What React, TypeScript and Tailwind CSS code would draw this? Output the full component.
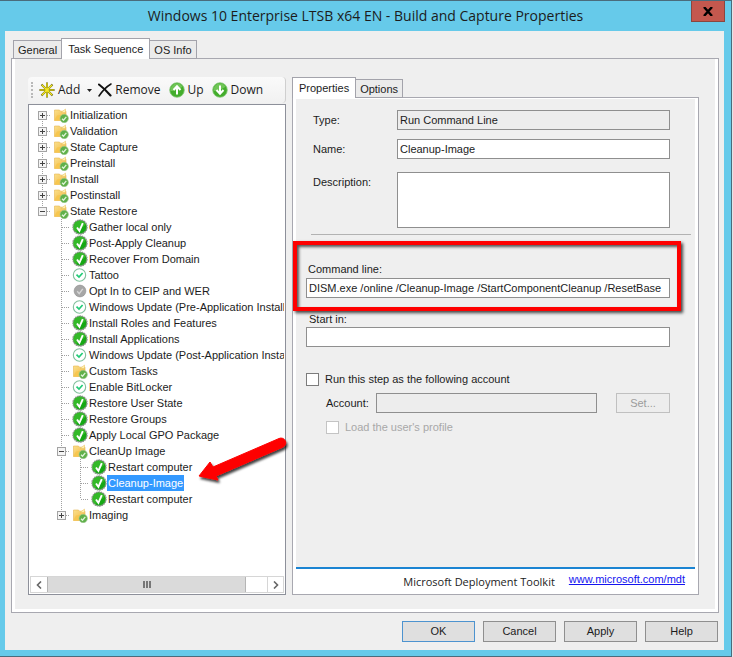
import type { ReactNode } from "react";

type IconKind = "folder" | "done" | "pending" | "disabled";

type Step = {
  label: string;
  depth: number;
  icon: IconKind;
  box?: "plus" | "minus";
  first?: boolean;
  last?: boolean;
  selected?: boolean;
};

const STEPS: Step[] = [
  { label: "Initialization", depth: 0, icon: "folder", box: "plus", first: true },
  { label: "Validation", depth: 0, icon: "folder", box: "plus" },
  { label: "State Capture", depth: 0, icon: "folder", box: "plus" },
  { label: "Preinstall", depth: 0, icon: "folder", box: "plus" },
  { label: "Install", depth: 0, icon: "folder", box: "plus" },
  { label: "Postinstall", depth: 0, icon: "folder", box: "plus" },
  { label: "State Restore", depth: 0, icon: "folder", box: "minus", last: true },
  { label: "Gather local only", depth: 1, icon: "done" },
  { label: "Post-Apply Cleanup", depth: 1, icon: "done" },
  { label: "Recover From Domain", depth: 1, icon: "done" },
  { label: "Tattoo", depth: 1, icon: "pending" },
  { label: "Opt In to CEIP and WER", depth: 1, icon: "disabled" },
  { label: "Windows Update (Pre-Application Installation)", depth: 1, icon: "pending" },
  { label: "Install Roles and Features", depth: 1, icon: "done" },
  { label: "Install Applications", depth: 1, icon: "done" },
  { label: "Windows Update (Post-Application Installation)", depth: 1, icon: "pending" },
  { label: "Custom Tasks", depth: 1, icon: "folder" },
  { label: "Enable BitLocker", depth: 1, icon: "pending" },
  { label: "Restore User State", depth: 1, icon: "done" },
  { label: "Restore Groups", depth: 1, icon: "done" },
  { label: "Apply Local GPO Package", depth: 1, icon: "done" },
  { label: "CleanUp Image", depth: 1, icon: "folder", box: "minus" },
  { label: "Restart computer", depth: 2, icon: "done" },
  { label: "Cleanup-Image", depth: 2, icon: "done", selected: true },
  { label: "Restart computer", depth: 2, icon: "done", last: true },
  { label: "Imaging", depth: 1, icon: "folder", box: "plus", last: true },
];

function StepIcon({ kind }: { kind: IconKind }) {
  if (kind === "folder") {
    return (
      <svg viewBox="0 0 16 16" className="size-4 shrink-0" aria-hidden="true">
        <defs>
          <linearGradient id="folder" x1="0" y1="0" x2="1" y2="1">
            <stop offset="0" stopColor="#fbe08a" />
            <stop offset="1" stopColor="#f0b541" />
          </linearGradient>
        </defs>
        <path d="M1.500 3h5l1 1.200h5.500V13.500H1.500z" fill="url(#folder)" stroke="#e6b550" strokeWidth=".6" />
        <path d="M8 5.500L12.500 2v3.500z" fill="#fff0b0" stroke="#e8bf5a" strokeWidth=".5" />
        <path d="M1.200 13.500L4 8.500l9-1.500v6.500z" fill="#f7c64f" />
        <circle cx="11.200" cy="11.500" r="4.200" fill="#5fb04a" stroke="#9fca92" strokeWidth=".6" />
        <path d="M9 11.800l1.500 1.400 2.800-3.300" fill="none" stroke="#dff3d9" strokeWidth="1.300" />
      </svg>
    );
  }
  if (kind === "done") {
    return (
      <svg viewBox="0 0 16 16" className="size-4 shrink-0" aria-hidden="true">
        <circle cx="8" cy="8" r="7" fill="#16a814" stroke="#8c8f8c" strokeWidth="1.400" strokeDasharray="1.600 .7" />
        <path d="M8 1.800a6.200 6.200 0 0 1 5.800 4L4 13.200A6.200 6.200 0 0 1 8 1.800z" fill="#56cf40" opacity=".45" />
        <path d="M5 8.500l2.400 3.300 3.400-7.600" fill="none" stroke="#fff" strokeWidth="1.900" />
      </svg>
    );
  }
  if (kind === "pending") {
    return (
      <svg viewBox="0 0 16 16" className="size-4 shrink-0" aria-hidden="true">
        <circle cx="7.500" cy="8" r="6.200" fill="#fff" stroke="#82bf9c" strokeWidth="1.100" />
        <path d="M4.500 7.600l2.500 2.400 3.600-4" fill="none" stroke="#22cc77" strokeWidth="1.700" />
      </svg>
    );
  }
  return (
    <svg viewBox="0 0 16 16" className="size-4 shrink-0" aria-hidden="true">
      <circle cx="8" cy="8" r="5.900" fill="#a6a6a6" stroke="#8f8f8f" strokeWidth=".6" />
      <path d="M5.200 8.200l2 2.400 3.600-4.800" fill="none" stroke="#d6d6d6" strokeWidth="1.400" />
    </svg>
  );
}

/** One indent column of a tree row: dotted guides and the expander box. */
function Guide({ up, down, across, box }: { up?: boolean; down?: boolean; across?: boolean; box?: "plus" | "minus" }) {
  return (
    <svg viewBox="0 0 19 16" className="h-4 w-[19px] shrink-0" aria-hidden="true" fill="none">
      <g stroke="#a0a0a0" strokeDasharray="1 1">
        {up && <path d="M9.500 0V8" />}
        {down && <path d="M9.500 8V16" />}
        {across && <path d="M10 8.500H18" />}
      </g>
      {box && (
        <>
          <rect x="5.500" y="4.500" width="8" height="8" fill="#f4f4f4" stroke="#a3a3a3" />
          <path d={box === "plus" ? "M7 8.500h5M9.500 6v5" : "M7 8.500h5"} stroke="#444" />
        </>
      )}
    </svg>
  );
}

function TreeRow({ step }: { step: Step }) {
  return (
    <li role="treeitem" aria-level={step.depth + 1} aria-selected={!!step.selected} className="flex h-4 items-center">
      {step.depth > 0 && <Guide />}
      {step.depth > 1 && <Guide up down />}
      <Guide up={!step.first} down={!step.last} across box={step.box} />
      <span className="flex w-[18px] shrink-0 justify-center">
        <StepIcon kind={step.icon} />
      </span>
      <span className={step.selected ? "-ml-px bg-[#3399ff] px-px leading-4 whitespace-nowrap text-white" : "leading-4 whitespace-nowrap"}>
        {step.label}
      </span>
    </li>
  );
}

function Tabs({ label, names, active }: { label: string; names: string[]; active: string }) {
  return (
    <div role="tablist" aria-label={label} className="relative -mb-px flex h-[21px] items-end">
      {names.map((name) =>
        name === active ? (
          <button key={name} role="tab" aria-selected className="h-[21px] border border-b-0 border-[#a3a3ab] bg-white px-1.5 leading-4">
            {name}
          </button>
        ) : (
          <button key={name} role="tab" aria-selected={false} className="h-[19px] border border-l-0 border-[#a3a3ab] bg-[#ebebeb] px-1 leading-4 first:border-l first:border-r-0">
            {name}
          </button>
        ),
      )}
    </div>
  );
}

function ToolButton({ icon, children }: { icon: ReactNode; children: ReactNode }) {
  return (
    <button className="flex items-center gap-[3px]">
      {icon}
      {children}
    </button>
  );
}

function ArrowBall({ down }: { down?: boolean }) {
  return (
    <svg viewBox="0 0 16 16" className="size-4" aria-hidden="true">
      <circle cx="8" cy="8" r="7.300" fill="#43ad2c" stroke="#87c878" strokeWidth=".8" />
      <path d="M8 1.400A6.600 6.600 0 0 0 1.500 9C5 9 11 7 13.500 4.500A6.600 6.600 0 0 0 8 1.400z" fill="#8ed673" opacity=".6" />
      <path d={down ? "M8 3.500v8M4.500 8l3.500 3.800L11.500 8" : "M8 12.500v-8M4.500 8L8 4.200 11.500 8"} fill="none" stroke="#fff" strokeWidth="2" />
    </svg>
  );
}

function Toolbar() {
  return (
    <div role="toolbar" className="flex h-[26px] items-center rounded-sm border-r border-[#cfcfcf] bg-gradient-to-b from-[#fafafa] to-[#f1f1f1] pl-[3px] font-['Open_Sans','Noto_Sans',sans-serif] text-xs">
      <span className="mr-1.5 h-4 border-l-2 border-dotted border-[#b9b9b9]" />
      <ToolButton
        icon={
          <svg viewBox="0 0 16 16" className="size-4" aria-hidden="true">
            <path d="M8 .5v15M.5 8h15M2.500 2.500l11 11M13.500 2.500l-11 11" stroke="#6a6412" strokeWidth="2" />
            <path d="M8 1v14M1 8h14M3 3l10 10M13 3L3 13" stroke="#f6ea20" strokeWidth="1.200" />
          </svg>
        }
      >
        Add
        <svg viewBox="0 0 5 3" className="ml-1 h-[3px] w-[5px]" aria-hidden="true">
          <path d="M0 0h5L2.500 3z" fill="#222" />
        </svg>
      </ToolButton>
      <span className="w-1.5" />
      <ToolButton
        icon={
          <svg viewBox="0 0 14 14" className="size-3.5" aria-hidden="true" fill="none" stroke="#111" strokeLinecap="round">
            <path d="M1 1.500c4 3 8 7 11.500 11" strokeWidth="2.100" />
            <path d="M13 1C8 4 4 8.500 1 13" strokeWidth="1.500" />
          </svg>
        }
      >
        Remove
      </ToolButton>
      <span className="w-2" />
      <ToolButton icon={<ArrowBall />}>Up</ToolButton>
      <span className="w-2" />
      <ToolButton icon={<ArrowBall down />}>Down</ToolButton>
    </div>
  );
}

function Chevron({ right }: { right?: boolean }) {
  return (
    <svg viewBox="0 0 6 8" className="h-2 w-1.5" aria-hidden="true" fill="none" stroke="#666" strokeWidth="1.600">
      <path d={right ? "M1 .5L4.500 4 1 7.500" : "M5 .5L1.500 4 5 7.500"} />
    </svg>
  );
}

function ScrollBar() {
  return (
    <div className="m-px flex h-[17px] border border-[#d6d6d6] bg-white">
      <button aria-label="Scroll left" className="flex w-4 items-center justify-center">
        <Chevron />
      </button>
      <button aria-label="Scroll position" className="flex w-[199px] items-center justify-center gap-px border-x border-[#b5b5b5] bg-[#dadada]">
        <span className="h-[7px] w-0.5 bg-[#777]" />
        <span className="h-[7px] w-0.5 bg-[#777]" />
        <span className="h-[7px] w-0.5 bg-[#777]" />
      </button>
      <span className="flex-1" />
      <button aria-label="Scroll right" className="flex w-4 items-center justify-center border-l border-[#d6d6d6]">
        <Chevron right />
      </button>
    </div>
  );
}

const FIELD = "h-5 min-w-0 border border-[#8f8f8f] px-0.5 leading-4 outline-none";

function PropertiesForm() {
  return (
    <form className="flex flex-1 flex-col bg-[#efefef] pt-[11px]">
      <div className="grid grid-cols-[84px_1fr] pr-[25px] pl-[17px]">
        <label htmlFor="type" className="leading-5">Type:</label>
        <input id="type" readOnly defaultValue="Run Command Line" className={`${FIELD} bg-[#ededed]`} />
        <label htmlFor="name" className="mt-[9px] leading-5">Name:</label>
        <input id="name" defaultValue="Cleanup-Image" className={`${FIELD} mt-[9px] bg-white`} />
        <label htmlFor="description" className="mt-[13px] leading-5">Description:</label>
        <textarea id="description" className="mt-[13px] h-14 resize-none border border-[#8f8f8f] bg-white outline-none" />
      </div>
      <hr className="mt-1.5 mr-1 mb-px ml-[15px] border-t border-[#b2b2b2]" />

      <div className="relative mt-[5px] flex h-[70px] flex-col pt-5 pr-[25px] pl-2.5">
        <label htmlFor="command" className="pl-0.5 leading-4">Command line:</label>
        <input id="command" defaultValue="DISM.exe /online /Cleanup-Image /StartComponentCleanup /ResetBase" className={`${FIELD} mt-px bg-white`} />
        <div className="pointer-events-none absolute inset-y-0 right-3.5 -left-[3px] border-4 border-[#fe0000] shadow-[2px_2px_3px_#444,inset_2px_2px_3px_#555]" />
      </div>

      <div className="flex flex-col pr-[25px] pl-2.5">
        <label htmlFor="start" className="pl-[3px] leading-4">Start in:</label>
        <input id="start" className={`${FIELD} bg-white`} />
      </div>

      <label className="mt-6 ml-2.5 flex h-4 items-center gap-1.5 leading-4">
        <input type="checkbox" className="size-[13px] appearance-none border border-[#7c7c7c] bg-white" />
        Run this step as the following account
      </label>
      <div className="mt-1.5 flex items-center pr-[25px] pl-[30px]">
        <label htmlFor="account" className="w-[50px] leading-5">Account:</label>
        <input id="account" disabled className={`${FIELD} flex-1 bg-[#ededed]`} />
        <button type="button" disabled className="ml-[19px] h-5 w-[54px] border border-[#c0c0c0] bg-[#ededed] text-[#9c9c9c]">Set...</button>
      </div>
      <label className="mt-1.5 ml-[30px] flex h-4 items-center gap-1.5 leading-4 text-[#a8a8a8]">
        <input type="checkbox" disabled className="size-[13px] appearance-none border border-[#c4c4c4] bg-white" />
        Load the user's profile
      </label>
    </form>
  );
}

function DialogButton({ primary, children }: { primary?: boolean; children: ReactNode }) {
  return (
    <button className={primary ? "h-[21px] w-[73px] border border-[#4d93cf] bg-[#dfdfdf]" : "h-[21px] w-[73px] border border-[#8f8f8f] bg-[#dfdfdf]"}>
      {children}
    </button>
  );
}

export default function App() {
  return (
    <div className="min-h-screen bg-[#dfe6ea] pr-px font-['Liberation_Sans',Arial,sans-serif] text-[11px] text-[#1c1c1c]">
      <main className="flex min-h-screen flex-col border-t border-r border-b border-[#4a6c7c] bg-[#66caea]">
        <header className="flex h-[30px] items-center pr-1.5 pl-10">
          <h1 className="flex-1 text-center font-['Open_Sans','Noto_Sans',sans-serif] text-sm">
            Windows 10 Enterprise LTSB x64 EN - Build and Capture Properties
          </h1>
          <button aria-label="Close" className="flex h-[21px] w-[34px] items-center justify-center self-start border border-t-0 border-[#8a4640] bg-[#c4584e]">
            <svg viewBox="0 0 10 9" className="h-[9px] w-2.5" aria-hidden="true">
              <path d="M1 0l8 9M9 0L1 9" stroke="#000" strokeWidth="2.400" />
            </svg>
          </button>
        </header>

        <div className="mr-[7px] mb-1.5 ml-[5px] flex flex-1 flex-col bg-[#efefef] pt-[7px] pr-[5px] pb-2 pl-1.5">
          <div className="pl-0.5">
            <Tabs label="Dialog pages" names={["General", "Task Sequence", "OS Info"]} active="Task Sequence" />
          </div>
          <section className="flex flex-1 flex-col border border-[#a8a8b0]">
            <div className="flex flex-1 gap-1.5 border-3 border-t-0 border-white pt-[18px] pr-4 pb-3.5 pl-[13px]">
              <div className="relative flex w-[258px] shrink-0 flex-col">
                <Toolbar />
                <div className="mt-px flex flex-1 flex-col border border-[#8d909a] bg-white">
                  <ul role="tree" aria-label="Task sequence steps" className="mr-px flex-1 overflow-hidden pt-0.5 pl-1">
                    {STEPS.map((step, i) => (
                      <TreeRow key={i} step={step} />
                    ))}
                  </ul>
                  <ScrollBar />
                </div>
                <svg viewBox="0 0 96 54" className="pointer-events-none absolute top-[356px] left-[168px] h-[54px] w-24" aria-hidden="true">
                  <defs>
                    <filter id="drop" x="-10%" y="-10%" width="130%" height="140%">
                      <feDropShadow dx="1.500" dy="2.500" stdDeviation="1.300" floodColor="#000" floodOpacity=".75" />
                    </filter>
                  </defs>
                  <path
                    d="M3 43L14 29L17 34L83 5.500A4.500 4.500 0 0 1 87 14L20 43L22 47Z"
                    fill="#fe0000"
                    stroke="#fe0000"
                    strokeLinejoin="round"
                    filter="url(#drop)"
                  />
                </svg>
              </div>

              <div className="flex min-w-0 flex-1 flex-col">
                <Tabs label="Step pages" names={["Properties", "Options"]} active="Properties" />
                <section className="flex flex-1 flex-col border border-[#a8a8b0] bg-white px-[3px] pt-px">
                  <PropertiesForm />
                  <footer className="flex h-[27px] items-center justify-end border-t-2 border-[#1b84d2] pr-2.5">
                    <span className="mt-0.5 mr-3.5 font-['Open_Sans','Noto_Sans',sans-serif] text-[11px]">Microsoft Deployment Toolkit</span>
                    <a href="#mdt" className="mb-1 text-[#1414f0] underline">www.microsoft.com/mdt</a>
                  </footer>
                </section>
              </div>
            </div>
          </section>
          <div className="mt-2 flex justify-end gap-2 pr-px">
            <DialogButton primary>OK</DialogButton>
            <DialogButton>Cancel</DialogButton>
            <DialogButton>Apply</DialogButton>
            <DialogButton>Help</DialogButton>
          </div>
        </div>
      </main>
    </div>
  );
}
